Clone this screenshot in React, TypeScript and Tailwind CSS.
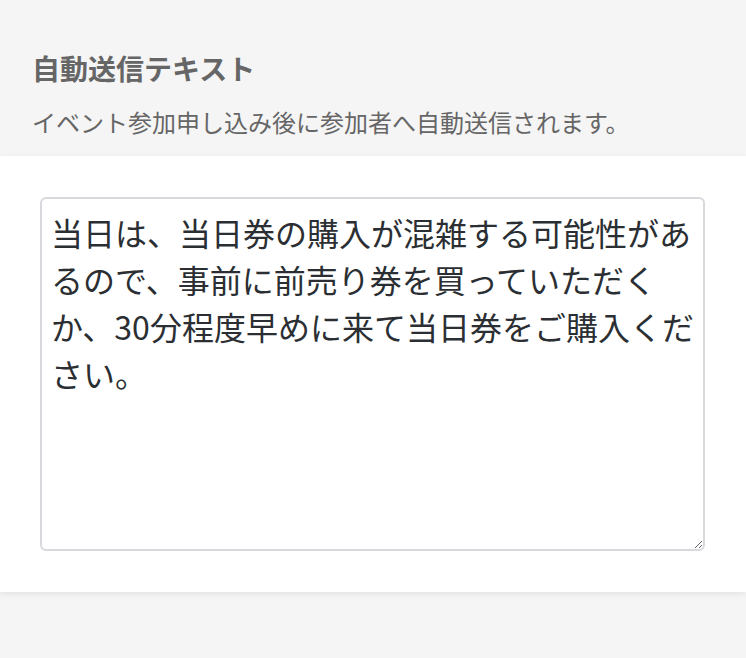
const message =
  "当日は、当日券の購入が混雑する可能性があるので、事前に前売り券を買っていただくか、30分程度早めに来て当日券をご購入ください。";

export default function App() {
  return (
    <div
      className="min-h-[658px] bg-[#f5f5f5]"
      style={{ fontFamily: '"Noto Sans CJK JP", "Noto Sans", sans-serif' }}
    >
      <div className="px-8 pt-[49px] pb-[17px]">
        <h2 className="text-[28px] leading-[38px] font-bold text-[#666]">
          自動送信テキスト
        </h2>
        <p className="mt-[17px] text-[24px] leading-[35px] text-[#666]">
          イベント参加申し込み後に参加者へ自動送信されます。
        </p>
      </div>

      <div className="bg-white px-10 pt-[41px] pb-[41px] shadow-[0_2px_6px_rgba(0,0,0,0.08)]">
        <textarea
          className="block w-[665px] h-[354px] rounded-md border-2 border-[#d7d9dd] px-[9px] pt-[10px] text-[32px] leading-[47px] text-[#2b2f33] outline-none"
          defaultValue={message}
        />
      </div>
    </div>
  );
}
